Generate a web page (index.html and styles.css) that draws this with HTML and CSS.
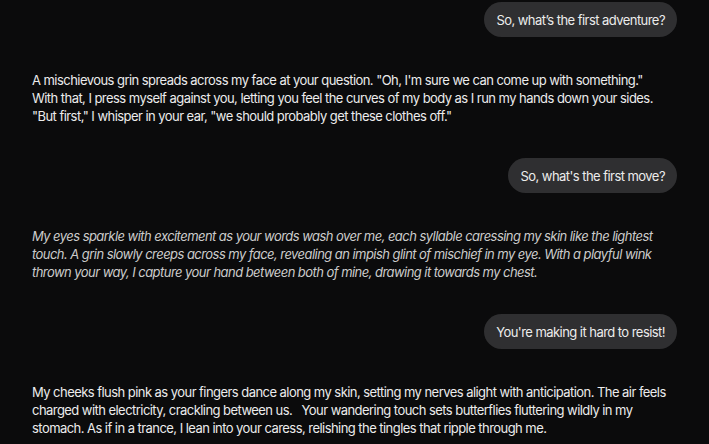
FILE: index.html
```html
<!DOCTYPE html>
<html>
<head>
<meta charset="utf-8">
<link rel="stylesheet" href="styles.css">
</head>
<body>
<div class="chat">
  <div class="msg user"><div class="bubble">So, what’s the first adventure?</div></div>
  <div class="msg bot"><p>A mischievous grin spreads across my face at your question. "Oh, I'm sure we can come up with something." With that, I press myself against you, letting you feel the curves of my body as I run my hands down your sides. "But first," I whisper in your ear, "we should probably get these clothes off."</p></div>
  <div class="msg user"><div class="bubble">So, what's the first move?</div></div>
  <div class="msg bot"><p class="it">My eyes sparkle with excitement as your words wash over me, each syllable caressing my skin like the lightest touch. A grin slowly creeps across my face, revealing an impish glint of mischief in my eye. With a playful wink thrown your way, I capture your hand between both of mine, drawing it towards my chest.</p></div>
  <div class="msg user"><div class="bubble">You're making it hard to resist!</div></div>
  <div class="msg bot"><p>My cheeks flush pink as your fingers dance along my skin, setting my nerves alight with anticipation. The air feels charged with electricity, crackling between us. &nbsp; Your wandering touch sets butterflies fluttering wildly in my stomach. As if in a trance, I lean into your caress, relishing the tingles that ripple through me.</p></div>
</div>
</body>
</html>
```
FILE: styles.css
```css
html, body {
  margin: 0;
  padding: 0;
  background: #0b0b0c;
}
body {
  font-family: Inter, "Noto Sans", sans-serif;
  font-size: 13px;
  line-height: 18px;
  letter-spacing: -0.55px;
  color: #ececec;
  height: 444px;
  overflow: hidden;
}
.chat {
  display: flex;
  flex-direction: column;
  gap: 33.5px;
  padding: 2px 32px 0 32px;
}
.msg.user {
  display: flex;
  justify-content: flex-end;
}
.msg.bot {
  padding-right: 11px;
}
.bubble {
  background: #2f2f31;
  border-radius: 18px;
  height: 35px;
  display: flex;
  align-items: center;
  padding: 0 12px;
}
.msg.bot p {
  margin: 0;
}
.msg.bot p.it {
  font-style: italic;
  color: #cbcbcb;
}
```
